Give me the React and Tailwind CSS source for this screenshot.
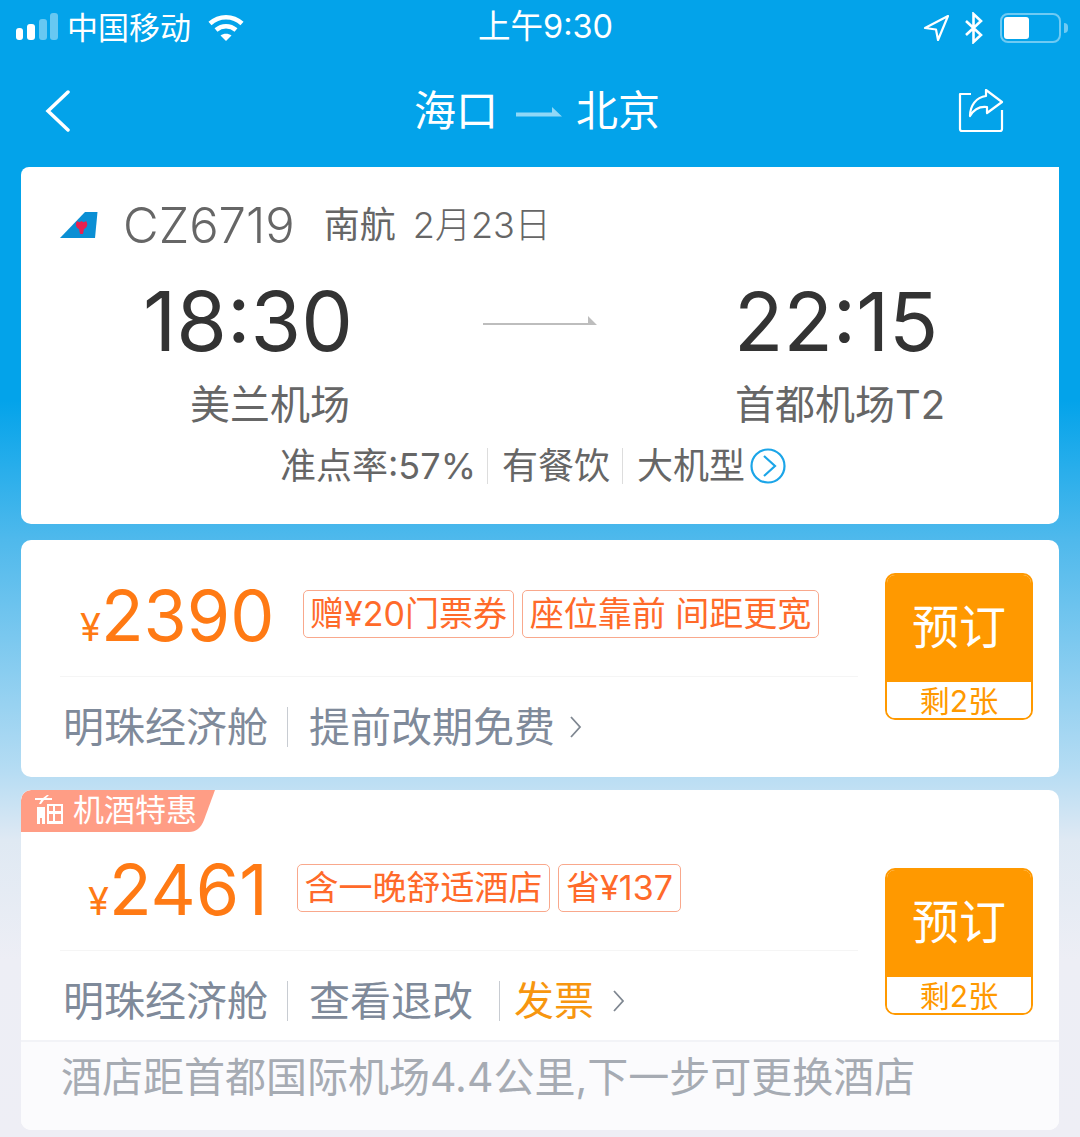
import React from "react";

function Signal() {
  return (
    <svg width="44" height="30" viewBox="0 0 44 30" className="shrink-0">
      <rect x="0" y="15" width="7" height="12" rx="3" fill="#fff" />
      <rect x="11" y="11" width="8" height="16" rx="3" fill="#fff" />
      <rect x="23" y="6" width="8" height="21" rx="3" fill="#fff" fillOpacity="0.4" />
      <rect x="34" y="0" width="8" height="27" rx="3" fill="#fff" fillOpacity="0.4" />
    </svg>
  );
}

function Wifi() {
  return (
    <svg width="36" height="28" viewBox="0 0 36 28" fill="none" stroke="#fff" strokeWidth="4.5" className="shrink-0">
      <path d="M2 9.5C11 1 25 1 34 9.5" />
      <path d="M8 16c6-5 14-5 20 0" />
      <path d="M18 27l-5.5-5.5c3-2.4 8-2.400 11 0z" fill="#fff" stroke="none" />
    </svg>
  );
}

function Bolt() {
  return (
    <svg width="20" height="32" viewBox="0 0 20 32" fill="none" stroke="#fff" strokeWidth="2.6" className="shrink-0">
      <path d="M2 9l15 14-7.500 7V2L17 9 2 23" />
    </svg>
  );
}

function Locate() {
  return (
    <svg width="26" height="28" viewBox="0 0 26 28" fill="none" stroke="#fff" strokeWidth="2.2" strokeLinejoin="round" className="shrink-0">
      <path d="M25 2L2 14l11 1.500L15 26z" />
    </svg>
  );
}

function Battery() {
  return (
    <div className="flex items-center shrink-0">
      <div className="w-[61px] h-[30px] rounded-[8px] border-2 border-[#6fcaf3] p-[2px]">
        <div className="w-[25px] h-full rounded-[3px] bg-white" />
      </div>
      <div className="w-[4px] h-[10px] rounded-r-full bg-[#6fcaf3] ml-[3px]" />
    </div>
  );
}

function TailLogo() {
  return (
    <svg width="38" height="28" viewBox="0 0 38 28" className="shrink-0">
      <path d="M0 27L25 1h12.500L35 27z" fill="#0b8fd4" />
      <path d="M17 10c2 1.500 3 1.500 4.500 0 1.500 1.500 3 1.500 4.500 0 2.500 3 1 7-2 8l-1 5h-3l-1-5c-3-1-4-5-2-8z" fill="#e8204f" />
    </svg>
  );
}

function Chevron({ className }) {
  return (
    <svg width="14" height="24" viewBox="0 0 14 24" fill="none" stroke="#7f8791" strokeWidth="1.8" className={className}>
      <path d="M2 2l9 10-9 10" />
    </svg>
  );
}

function Tag({ children, className }) {
  return (
    <div className={`h-[48px] flex items-center justify-center rounded-[5px] border border-[#f9a88c] text-[#ff6a2a] text-[34px] whitespace-nowrap ${className}`}>
      {children}
    </div>
  );
}

function Price({ value, className }) {
  return (
    <div className={`flex items-baseline text-[#ff7a14] shrink-0 mt-[4px] ${className}`}>
      <span className="text-[38px] leading-none">¥</span>
      <span className="text-[70px] leading-none">{value}</span>
    </div>
  );
}

function BookButton({ className }) {
  return (
    <div className={`w-[148px] h-[147px] shrink-0 rounded-[10px] border-2 border-[#ff9900] overflow-hidden flex flex-col ${className}`}>
      <div className="h-[107px] pb-[4px] bg-[#ff9900] text-white text-[47px] leading-none flex items-center justify-center">预订</div>
      <div className="flex-1 pt-[2px] bg-white text-[#ff9900] text-[30px] leading-none flex items-center justify-center">剩2张</div>
    </div>
  );
}

function Sep({ className }) {
  return <div className={`w-px h-[40px] bg-[#c8ccd2] shrink-0 ${className}`} />;
}

export default function App() {
  return (
    <div className="w-[1080px] h-[1137px] overflow-hidden flex flex-col bg-[linear-gradient(180deg,#03a3ea_0px,#03a3ea_400px,#4fb9ec_540px,#b5dcf3_770px,#dfe9f3_840px,#edeef5_960px,#eeeef5_1137px)] font-['Inter','Noto_Sans_CJK_SC',sans-serif]">
      {/* Status bar */}
      <div className="h-[55px] flex items-center text-white shrink-0 pl-[16px] pr-[12px]">
        <Signal />
        <span className="ml-[7px] text-[31px] leading-none">中国移动</span>
        <div className="ml-[17px]"><Wifi /></div>
        <span className="ml-[234px] text-[32.5px] leading-none w-[133px] whitespace-nowrap">上午9:30</span>
        <div className="ml-auto flex items-center">
          <Locate />
          <div className="ml-[15px]"><Bolt /></div>
          <div className="ml-[16px]"><Battery /></div>
        </div>
      </div>

      {/* Nav */}
      <div className="h-[112px] flex items-center shrink-0 text-white pb-[1px]">
        <svg width="26" height="42" viewBox="0 0 26 42" fill="none" stroke="#fff" strokeWidth="3.500" strokeLinecap="round" className="ml-[45px] shrink-0">
          <path d="M23 2L3 21l20 19" />
        </svg>
        <span className="ml-[343px] text-[42px] leading-none">海口</span>
        <svg width="46" height="12" viewBox="0 0 46 12" className="ml-[18px] shrink-0 mt-[3px]">
          <path d="M0 6.500h36V1l10 9.500H0z" fill="#8fd8f7" />
        </svg>
        <span className="ml-[14px] text-[42px] leading-none">北京</span>
        <svg width="46" height="44" viewBox="0 0 46 44" fill="none" stroke="#fff" strokeWidth="2.200" strokeLinejoin="round" className="ml-[298px] shrink-0">
          <path d="M13 5H2v35a2 2 0 0 0 2 2h38a2 2 0 0 0 2-2V21" />
          <path d="M28 1l16 12-15 11v-6c-8-1-13 2-17 9 0-10 6-19 16-20z" />
        </svg>
      </div>

      {/* Flight card */}
      <div className="mx-[21px] h-[357px] shrink-0 bg-white rounded-tl-[8px] rounded-b-[10px] flex flex-col">
        <div className="flex items-center h-[116px] pl-[39px] text-[#666]">
          <TailLogo />
          <span className="ml-[25px] text-[49px] leading-none font-light">CZ6719</span>
          <span className="ml-[29px] text-[36px] leading-none">南航</span>
          <span className="ml-[17px] text-[36px] leading-none font-light">2月23日</span>
        </div>
        <div className="flex items-center h-[78px]">
          <div className="w-[332px] text-right text-[82px] leading-none text-[#333]">18:30</div>
          <div className="w-[381px] flex justify-center pr-[8px] pb-[4px]">
            <svg width="114" height="12" viewBox="0 0 114 12">
              <path d="M0 11h114l-9-9v7H0z" fill="#bdbdbd" />
            </svg>
          </div>
          <div className="text-[81px] leading-none text-[#333]">22:15</div>
        </div>
        <div className="flex items-center h-[46px] mt-[21px] text-[40px] leading-none text-[#666]">
          <div className="w-[329px] text-right">美兰机场</div>
          <div className="ml-[385px] whitespace-nowrap">首都机场T2</div>
        </div>
        <div className="flex items-center h-[40px] mt-[18px] ml-[259px] text-[36px] leading-none text-[#666]">
          <span>准点率:57%</span>
          <div className="w-px h-[36px] bg-[#ddd] ml-[11px]" />
          <span className="ml-[14px]">有餐饮</span>
          <div className="w-px h-[36px] bg-[#ddd] ml-[12px]" />
          <span className="ml-[14px]">大机型</span>
          <svg width="36" height="36" viewBox="0 0 36 36" fill="none" stroke="#1ba5e8" strokeWidth="2.200" className="ml-[5px] shrink-0">
            <circle cx="18" cy="18" r="16.500" />
            <path d="M14 8l11 10-11 10" />
          </svg>
        </div>
      </div>

      {/* Fare 1 */}
      <div className="mx-[21px] mt-[16px] h-[237px] shrink-0 bg-white rounded-[10px] flex items-start">
        <div className="w-[798px] ml-[39px] shrink-0">
          <div className="h-[137px] pt-[11px] border-b border-[#f5f5f5] flex items-center">
            <Price value="2390" className="w-[243px] pl-[20px]" />
            <Tag className="w-[211px]">赠¥20门票券</Tag>
            <Tag className="w-[297px] ml-[8px]">座位靠前 间距更宽</Tag>
          </div>
          <div className="mt-[27px] h-[46px] flex items-center pl-[3px] text-[41px] leading-none text-[#7f8a9a]">
            <span>明珠经济舱</span>
            <Sep className="ml-[19px]" />
            <span className="ml-[21px]">提前改期免费</span>
            <Chevron className="ml-[14px]" />
          </div>
        </div>
        <BookButton className="ml-[27px] mt-[33px]" />
      </div>

      {/* Fare 2 */}
      <div className="mx-[21px] mt-[13px] h-[340px] shrink-0 bg-white rounded-[10px] relative overflow-hidden flex flex-col">
        <div className="absolute left-0 top-0 h-[42px] w-[194px] text-white">
          <svg width="194" height="42" viewBox="0 0 194 42" className="absolute inset-0">
            <path d="M0 10a10 10 0 0 1 10-10h184l-11 30c-3 8-8 12-15 12H0z" fill="#ff9d85" />
          </svg>
          <svg width="32" height="30" viewBox="0 0 32 30" className="absolute left-[12px] top-[5px]" fill="#fff">
            <path d="M2 3h8l4-3h2l-3 3h6v2h-8l-3 4H6l2-4H2z" />
            <path d="M4 12h8v17H9v-6H7v6H4zM14 9h16v20H14zM16 11v5h4v-5zm6 0v5h6v-5zM16 19v7h4v-7zm6 0v7h6v-7z" fillRule="evenodd" />
          </svg>
          <span className="absolute left-[52px] top-[4px] text-[31px] leading-none whitespace-nowrap">机酒特惠</span>
        </div>
        <div className="h-[250px] flex items-start shrink-0">
          <div className="w-[798px] ml-[39px] shrink-0">
            <div className="h-[161px] pt-[35px] border-b border-[#f5f5f5] flex items-center">
              <Price value="2461" className="w-[237px] pl-[28px]" />
              <Tag className="w-[253px]">含一晚舒适酒店</Tag>
              <Tag className="w-[123px] ml-[8px]">省¥137</Tag>
            </div>
            <div className="mt-[27px] h-[46px] flex items-center pl-[3px] text-[41px] leading-none text-[#7f8a9a]">
              <span>明珠经济舱</span>
              <Sep className="ml-[19px]" />
              <span className="ml-[21px]">查看退改</span>
              <Sep className="ml-[26px]" />
              <span className="ml-[14px] text-[#f7960f] text-[40px]">发票</span>
              <Chevron className="ml-[18px]" />
            </div>
          </div>
          <BookButton className="ml-[27px] mt-[78px]" />
        </div>
        <div className="flex-1 bg-[#fbfbfd] border-t-2 border-[#f2f3f7] pl-[40px] pt-[15px] text-[41px] leading-none text-[#a6abb3] whitespace-nowrap">
          酒店距首都国际机场4.4公里,下一步可更换酒店
        </div>
      </div>
    </div>
  );
}
